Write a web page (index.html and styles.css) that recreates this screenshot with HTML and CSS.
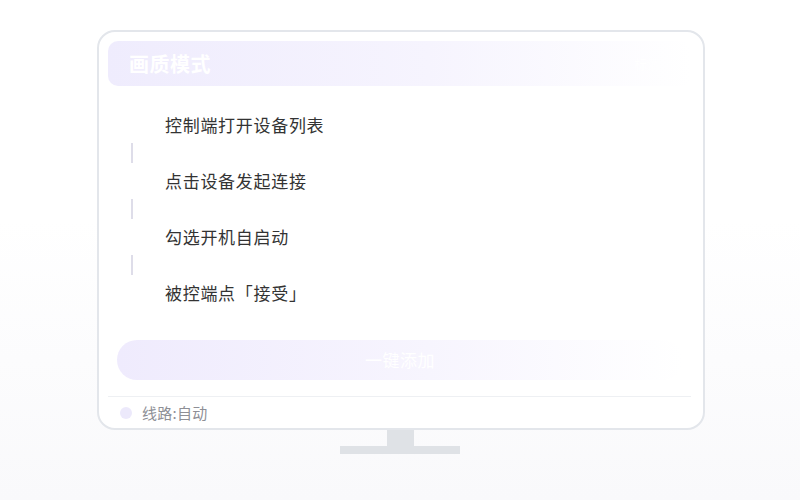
FILE: index.html
```html
<!DOCTYPE html>
<html lang="zh-CN">
<head>
  <meta charset="UTF-8">
  <title>画质模式</title>
  <link rel="stylesheet" href="styles.css">
</head>
<body>

<div class="stage">
  <!-- 显示器外框 -->
  <div class="monitor">
    <div class="panel-head">
      <span class="panel-title">画质模式</span>
      <span class="panel-extra">标清 ›</span>
    </div>

    <!-- 步骤列表 -->
    <div class="steps">
      <div class="step">控制端打开设备列表</div>
      <div class="step-line"></div>
      <div class="step">点击设备发起连接</div>
      <div class="step-line"></div>
      <div class="step">勾选开机自启动</div>
      <div class="step-line"></div>
      <div class="step">被控端点「接受」</div>
    </div>

    <div class="add-btn">一键添加</div>

    <div class="route">
      <span class="route-dot"></span>
      <span class="route-text">线路:自动</span>
    </div>
  </div>

  <!-- 底座 -->
  <div class="stand-neck"></div>
  <div class="stand-base"></div>
</div>

</body>
</html>
```

FILE: styles.css
```css
html, body {
  margin: 0;
  height: 100%;
}

body {
  font-family: "Noto Sans CJK SC", "Noto Sans", sans-serif;
  background: linear-gradient(to bottom, #ffffff 0, #ffffff 220px, #f9f9fb 500px);
  color: #333;
}

.stage {
  padding-top: 30px;
  display: flex;
  flex-direction: column;
  align-items: center;
}

/* === 显示器 === */
.monitor {
  width: 608px;
  box-sizing: border-box;
  border: 2px solid #e3e6eb;
  border-radius: 18px;
  background: #fff;
  padding: 9px 12px 0 9px;
  margin-left: 2px;
}

.panel-head {
  height: 45px;
  border-radius: 10px;
  background: linear-gradient(to right, #efecfd 0%, #f6f4fe 55%, #ffffff 100%);
  display: flex;
  align-items: center;
  justify-content: space-between;
  padding: 0 24px 0 21px;
}

.panel-title {
  color: #fff;
  font-size: 20px;
  font-weight: bold;
  letter-spacing: 0.5px;
}

.panel-extra {
  color: #fff;
  font-size: 13px;
}

/* === 步骤 === */
.steps {
  margin-top: 21px;
  display: flex;
  flex-direction: column;
}

.step {
  height: 36px;
  line-height: 36px;
  padding-left: 57px;
  font-size: 17px;
  letter-spacing: 0.7px;
  color: #333;
}

.step-line {
  width: 2px;
  height: 20px;
  margin-left: 23px;
  background: #dedde9;
}

/* === 按钮 === */
.add-btn {
  margin: 29px 8px 0 9px;
  height: 40px;
  line-height: 40px;
  border-radius: 20px;
  background: linear-gradient(to right, #efebfd 0%, #f7f5fe 55%, #ffffff 100%);
  color: #fff;
  font-size: 17px;
  letter-spacing: 0.5px;
  text-align: center;
}

/* === 线路 === */
.route {
  margin-top: 16px;
  border-top: 1px solid #eef0f3;
  height: 31px;
  display: flex;
  align-items: center;
  padding-left: 12px;
}

.route-dot {
  width: 12px;
  height: 12px;
  border-radius: 50%;
  background: #ece9fb;
}

.route-text {
  margin-left: 10px;
  font-size: 15px;
  letter-spacing: 0.3px;
  color: #8e8f96;
}

/* === 底座 === */
.stand-neck {
  width: 27px;
  height: 16px;
  background: #dfe2e6;
}

.stand-base {
  width: 120px;
  height: 8px;
  background: #dfe2e6;
}
```
